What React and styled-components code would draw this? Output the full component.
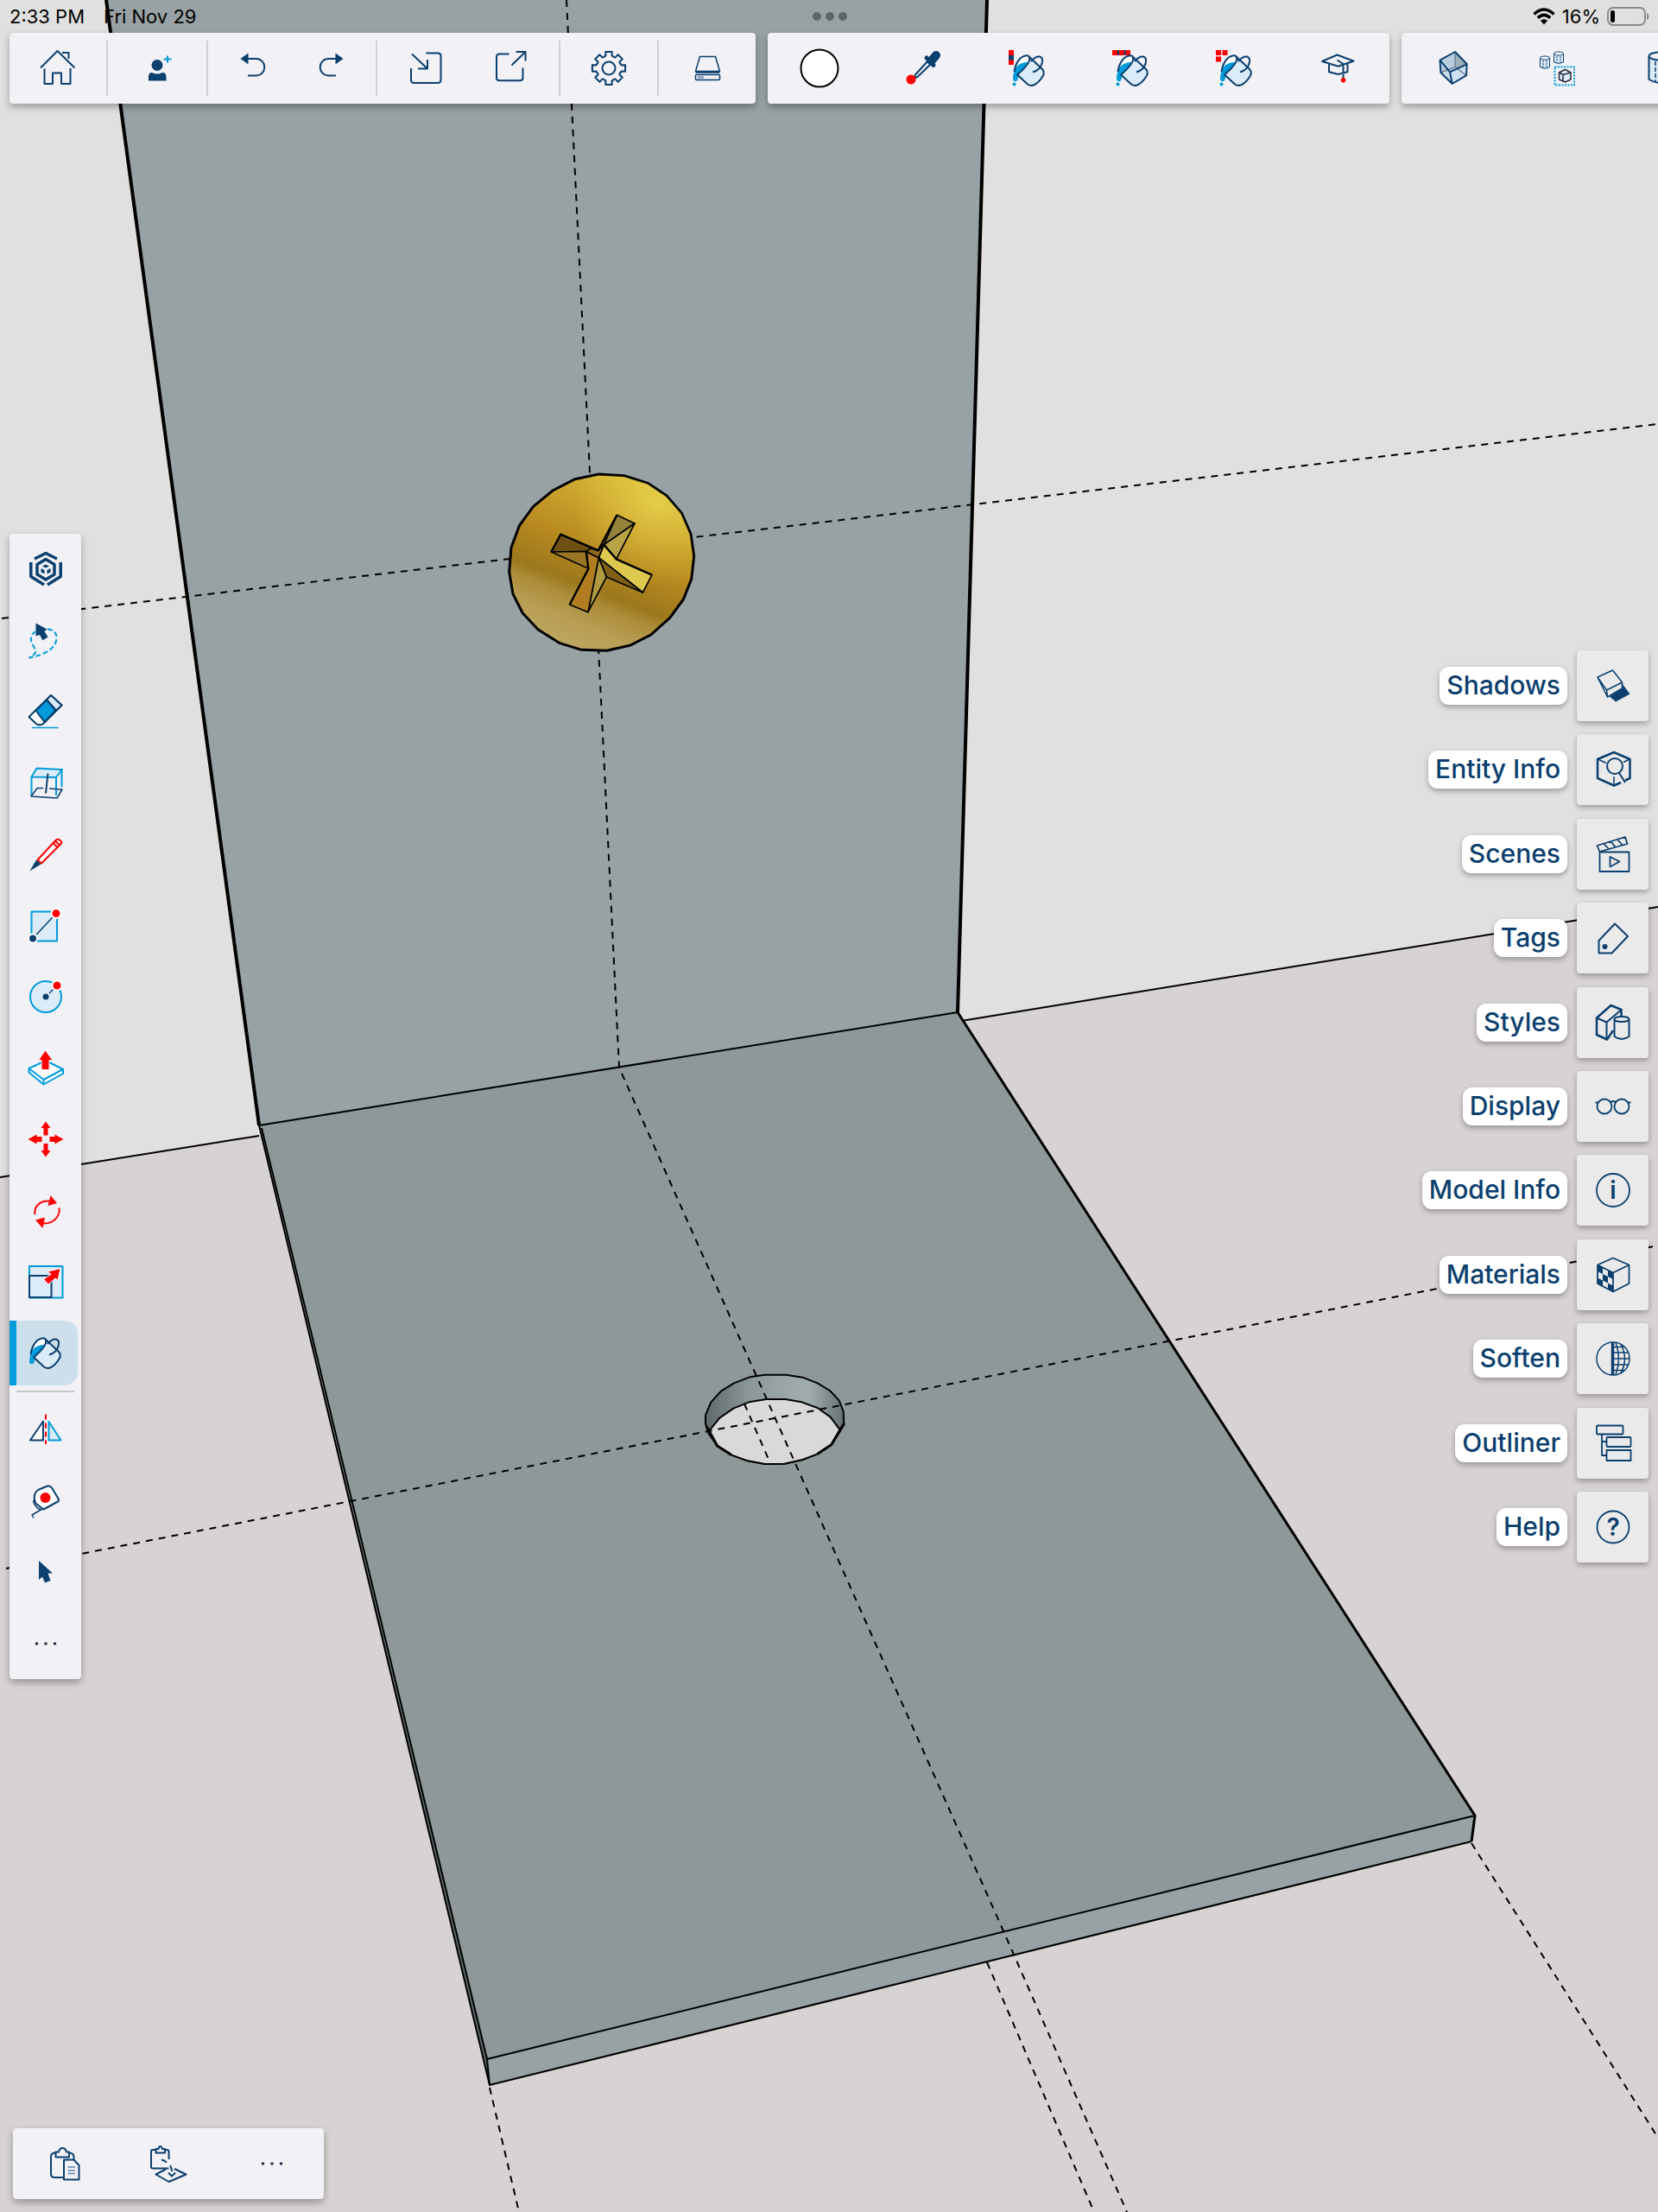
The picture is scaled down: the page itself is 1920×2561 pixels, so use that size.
import React, { useState } from 'react';
import styled, { createGlobalStyle, css } from 'styled-components';

const NAVY = '#0b3f6e';
const BLUE = '#029bdc';
const RED = '#ff0000';
const PALE = '#dbebf8';

const GlobalStyle = createGlobalStyle`
  *, *::before, *::after {
    box-sizing: border-box;
  }

  body {
    margin: 0;
    background: #d7d3d2;
    font-family: Inter, Roboto, 'Liberation Sans', sans-serif;
  }

  button {
    margin: 0;
    padding: 0;
    border: 0;
    background: none;
    color: inherit;
    font: inherit;
    cursor: pointer;
  }
`;

const Screen = styled.div`
  position: relative;
  display: grid;
  grid-template-columns: minmax(0, 1fr);
  grid-template-rows: auto auto 1fr auto;
  min-height: 100vh;
  overflow: hidden;
`;

const Canvas = styled.svg`
  position: absolute;
  inset: 0;
  width: 100%;
  height: 100%;
`;

const StatusBar = styled.header`
  position: relative;
  display: grid;
  grid-template-columns: 1fr auto 1fr;
  align-items: center;
  height: 38px;
  padding: 0 10px 0 11px;
  color: #000;
  font-size: 22px;
  font-weight: 400;
  line-height: 38px;
`;

const StatusGroup = styled.div`
  display: flex;
  align-items: center;
  gap: ${({ $gap }) => $gap}px;
  justify-content: ${({ $end }) => ($end ? 'flex-end' : 'flex-start')};
`;

const MultitaskDots = styled.button`
  display: flex;
  gap: 5px;

  span {
    width: 10px;
    height: 10px;
    border-radius: 50%;
    background: #5c6769;
  }
`;

const TopBar = styled.nav`
  position: relative;
  display: flex;
  gap: 14px;
  padding-left: 11px;
`;

const panel = css`
  background: #f2f1f6;
  border-radius: 4px;
  box-shadow: 0 4px 8px rgba(0, 0, 0, 0.3);
`;

const Toolbar = styled.div`
  ${panel}
  display: flex;
  flex: none;
  align-items: center;
  height: 82px;
`;

const ToolGroup = styled.div`
  display: flex;
  justify-content: center;
  align-items: center;
  gap: ${({ $gap = 0 }) => $gap}px;
  height: 64px;
  padding: 0 ${({ $pad = 11 }) => $pad}px;

  & + & {
    border-left: 2px solid #cfcfd4;
  }
`;

const ToolButton = styled.button`
  display: grid;
  place-items: center;
  width: ${({ $width = 120 }) => $width}px;
  height: 64px;
`;

const Workspace = styled.main`
  position: relative;
  display: flex;
  justify-content: space-between;
  align-items: center;
  padding: 0 11px;
`;

const Rail = styled.div`
  ${panel}
  width: 83px;
`;

const RailSection = styled.div`
  display: grid;
  grid-auto-rows: 1fr;
  align-items: center;
  height: ${({ $height }) => $height}px;
`;

const RailDivider = styled.hr`
  height: 2px;
  margin: 2px 8px;
  border: 0;
  background: #c6c6ca;
`;

const RailButton = styled.button`
  display: grid;
  place-items: center;
  width: 83px;
  height: 75px;

  ${({ $active }) =>
    $active &&
    css`
      width: 79px;
      padding-right: 4px;
      border-left: 8px solid ${BLUE};
      border-radius: 0 15px 15px 0;
      background: #cddfea;
    `}
`;

const PanelList = styled.div`
  display: grid;
  grid-auto-rows: 1fr;
  align-items: center;
  justify-items: end;
  height: 1072px;
`;

const PanelButton = styled.button`
  display: flex;
  align-items: center;
  gap: 11px;
`;

const PanelLabel = styled.span`
  height: 44px;
  padding: 0 8px;
  border-radius: 11px;
  background: #fff;
  box-shadow: 0 3px 6px rgba(0, 0, 0, 0.3);
  color: ${NAVY};
  font-size: 30px;
  font-weight: 500;
  line-height: 43px;
`;

const PanelTile = styled.span`
  display: grid;
  place-items: center;
  width: 83px;
  height: 82px;
  border-radius: 4px;
  background: #eaeaea;
  box-shadow: 0 3px 6px rgba(0, 0, 0, 0.3);
`;

const Footer = styled.footer`
  position: relative;
  display: flex;
  padding: 22px 15px 15px;
`;

const IconSvg = styled.svg`
  display: block;
  width: 48px;
  height: 48px;
  overflow: visible;
  fill: none;
  stroke: ${NAVY};
  stroke-width: 2;
  stroke-linejoin: round;

  text {
    fill: ${NAVY};
    stroke: none;
    font-family: Inter, sans-serif;
    text-anchor: middle;
  }
`;

const gearPoints = Array.from({ length: 8 }, (_, i) =>
  [
    [-22, 14.5],
    [-14, 15],
    [-11, 19.5],
    [11, 19.5],
    [14, 15],
    [22, 14.5],
  ].map(([deg, r]) => {
    const a = ((i * 45 + deg - 90) * Math.PI) / 180;
    const radius = i % 2 ? r - 0.5 : r;
    return `${(24 + radius * Math.cos(a)).toFixed(1)},${(24 + radius * Math.sin(a)).toFixed(1)}`;
  })
)
  .flat()
  .join(' ');

const Bucket = () => (
  <>
    <path
      d="M26 10.5L42 25Q46 28 43 33Q38 42 31 44Q28 45 25 42L12 29L22 23Q28 17 27 12Z"
      fill={PALE}
      stroke="none"
    />
    <path
      d="M10 28Q12 17 18 12Q25 7 27 11Q28 17 21 24Q16 28 13 31L10 29Z"
      fill="#fff"
      stroke="none"
    />
    <path
      d="M26 17Q17 17 12.500 22Q8 28 8 37Q9 40 12 39Q14 38 14.500 32Q18 27 22 24Q25 21 26 17Z"
      fill={BLUE}
      stroke="none"
    />
    <path d="M9.500 28Q11 18 17 12Q23 8 26 9.800Q29 13 25 19Q20 26 13 31.500L25 42.500Q28 45 32 43.500Q38 41 43 32.500Q45 28.500 42 25L26 10" />
    <path d="M29 16Q34 10 39 10.500Q43 12 42 17Q40 26 31 28.500" />
  </>
);

const icons = {
  home: (
    <path d="M4 23.500L23.500 4L43.500 23.500M8.500 24.500V42H18V29.500H28V42H38.500V24M29 6H36.500V13" />
  ),
  person: (
    <>
      <ellipse cx="24" cy="20.500" rx="6.500" ry="6.500" fill={NAVY} stroke="none" />
      <path d="M14 38.500V34Q14 29 18 29Q24 32 30 29Q34.500 29 34.500 34V38.500Z" fill={NAVY} stroke="none" />
      <path d="M31.500 13.500H40.500M36 9.500V17.500" stroke={BLUE} />
    </>
  ),
  undo: (
    <>
      <path d="M9.500 13L18.500 6.500V19.500Z" fill={NAVY} stroke="none" />
      <path d="M18 13H28.500A9.800 9.800 0 0 1 28.500 32.500H18" />
    </>
  ),
  redo: (
    <>
      <path d="M38.500 13L29.500 6.500V19.500Z" fill={NAVY} stroke="none" />
      <path d="M30 13H20.500A9.800 9.800 0 0 0 20.500 32.500H30" />
    </>
  ),
  importFile: (
    <path d="M8 7.500L26 24.500M15 24.500H26V14M7 24V37.500Q7 41 10.500 41H38Q41.500 41 41.500 37.500V10Q41.500 6.500 38 6.500H24.500" />
  ),
  exportFile: (
    <path d="M25.500 20.500L41.500 5M30.500 5H41.500V15.500M38.500 23.500V35Q38.500 38.300 35 38.300H11.500Q8 38.300 8 35V11Q8 7.500 11.500 7.500H22.500" />
  ),
  gear: (
    <>
      <polygon points={gearPoints} />
      <circle cx="24" cy="24" r="7.500" />
    </>
  ),
  drive: (
    <>
      <path d="M15.500 10.500H33.500L38.500 27.500H10.500ZM10.500 29H38.500" strokeWidth="1.500" />
      <rect x="10.500" y="31.500" width="28" height="6" rx="1" strokeWidth="1.500" />
      <path d="M13 34.500H20" stroke="#7f9dbd" strokeWidth="2.500" />
    </>
  ),
  swatch: <circle cx="24" cy="24" r="21.500" fill="#fff" stroke="#000" />,
  dropper: (
    <>
      <path d="M29.500 15.500L15 31.500L13.500 35.500L17.500 34L33 19" />
      <path d="M33.500 15.500L39 9" strokeWidth="10" strokeLinecap="round" />
      <path d="M28 12L36 20.500" strokeWidth="5" strokeLinecap="round" />
      <circle cx="10" cy="37" r="5.500" fill={RED} stroke="none" />
    </>
  ),
  paintVertical: (
    <>
      <path d="M6 3V20" stroke={RED} strokeWidth="6" />
      <path d="M6 9V14.500" strokeWidth="6" />
      <Bucket />
      <circle cx="9.500" cy="42.500" r="2" fill={BLUE} stroke="none" />
    </>
  ),
  paintRow: (
    <>
      <path d="M3 6H24" stroke={RED} strokeWidth="6" />
      <path d="M9 6H11M16.500 6H18.500" strokeWidth="6" />
      <Bucket />
      <circle cx="9.500" cy="42.500" r="2" fill={BLUE} stroke="none" />
    </>
  ),
  paintGrid: (
    <>
      <path d="M3 6H9M10.500 6H16.500M3 13.500H9" stroke={RED} strokeWidth="6" />
      <Bucket />
      <circle cx="9.500" cy="42.500" r="2" fill={BLUE} stroke="none" />
    </>
  ),
  learn: (
    <>
      <path d="M6 16L23.500 8.500L42.500 15.800L24.500 21.800ZM14 19V28.300L24.500 31L35.500 28.300V19M23.500 14.500L30.500 19V36" />
      <circle cx="30.500" cy="37.700" r="2.800" fill={RED} stroke="none" />
    </>
  ),
  cube: (
    <>
      <path d="M26 5L8.500 14.700L9.400 29L22.700 42L39 32.300L39.700 19.300Z" fill="#b9cfe0" stroke="none" />
      <path d="M26 5V22.500L39 32.300L39.700 19.300Z" fill="#9db0be" stroke="none" />
      <path d="M20 28.300L9.400 29L22.700 42L39 32.300L39.700 19.300Z" fill="#cde0ef" stroke="none" />
      <path d="M26 5V22.500L9.400 29M26 22.500L39 32.300" stroke="#6f8599" strokeWidth="1.500" />
      <path d="M26 5L8.500 14.700L9.400 29L22.700 42L39 32.300L39.700 19.300ZM8.500 14.700L20 28.300L39.700 19.300M20 28.300L22.700 42" />
    </>
  ),
  components: (
    <>
      <g strokeWidth="1">
        <path d="M4.500 12V22.500Q10 26 15.500 22.500V12" fill={PALE} />
        <ellipse cx="10" cy="12" rx="5.500" ry="2" fill="#fff" />
        <path d="M20.500 7V17Q26 20 31.500 17V7" fill={PALE} />
        <ellipse cx="26" cy="7" rx="5.500" ry="2" fill="#fff" />
        <path d="M8 15V23M12 15V23M24 10V17M28 10V17" strokeDasharray="2 1" />
      </g>
      <rect x="21.500" y="22.500" width="22.500" height="21" stroke={BLUE} strokeDasharray="2 1.500" />
      <g stroke="#2b2b3c" strokeWidth="1.500">
        <path d="M26.500 29L33.500 25.500L40 29V37L33.500 40L26.500 37Z" fill={PALE} />
        <path d="M26.500 29L31 31.500L40 29M31 31.500V39.500" />
      </g>
    </>
  ),
  cylinder: (
    <>
      <path d="M10.500 10V37Q24 45 37.500 37V10" fill={PALE} />
      <ellipse cx="24" cy="10" rx="13.500" ry="4.500" fill="#f2f1f6" />
      <path d="M18 16V41M30 16V41" strokeDasharray="5 2" strokeWidth="1.500" />
    </>
  ),
  model: (
    <>
      <path d="M11 12L24 5.500L37 12M6.800 16V32.500L22 42M41.200 16V32.500L26 42" strokeWidth="3.500" />
      <path d="M24 12.500L34 18.500V30L24 36L14 30V18.500Z" strokeWidth="3.500" />
      <path d="M20 20.500L24 18.500L28 20.500L24 22.500ZM18.500 23L22.500 25V29.500L18.500 27.500ZM29.500 23L25.500 25V29.500L29.500 27.500Z" fill={NAVY} stroke="none" />
    </>
  ),
  lasso: (
    <>
      <path
        d="M26 10.500Q37 11 36.500 22Q34 38 5 43.500Q14 39 12 34L7.500 26Q5 18 12 13"
        stroke={BLUE}
        strokeDasharray="6 3"
      />
      <path d="M12.500 3.500L25.500 10.500L22.500 13L26.500 19.500L20.500 23.500L17 17L12.500 18.500Z" fill={NAVY} stroke="none" />
    </>
  ),
  eraser: (
    <>
      <path d="M4.500 30L30 5L42.500 16.500L21.500 37.500Q17 41 13 38Z" fill="#fff" />
      <path d="M25 10L30 5L42.500 16.500L36 22.500Z" fill={PALE} />
      <path d="M12.500 22.500L25 10.500L35.500 22.500L22.500 36Z" fill={BLUE} />
      <path d="M8 42.500H38.500" stroke={BLUE} strokeWidth="1.500" />
    </>
  ),
  box: (
    <>
      <path d="M7.500 16.500L13.500 6.500L43 8L36 17Z" fill={PALE} stroke={BLUE} />
      <path d="M7.500 16.500V38M36 17V38M42.500 8V28" stroke={BLUE} />
      <path d="M21 29.500H14L7 39L37 41L43 31L28 30" strokeWidth="1.500" />
      <path d="M26.500 12.500L24 35.500" />
    </>
  ),
  pencil: (
    <>
      <path d="M14.500 30.500L36 7.500Q38 6 40 7.500Q43 9.500 42 11.500L19 34.500ZM33 11.500L37.500 16M35.500 9L40 13.500" stroke={RED} fill="#fff" />
      <path d="M5.500 43.500L13 30.500L18.500 35.500Z" fill={NAVY} stroke="none" />
    </>
  ),
  rectangle: (
    <>
      <rect x="7.500" y="7.500" width="29.500" height="34" fill={PALE} stroke={BLUE} />
      <path d="M9 38.500L36 9.500" strokeWidth="1.500" />
      <circle cx="9" cy="38.500" r="5" fill={NAVY} stroke="#fff" />
      <circle cx="36" cy="9.500" r="5.500" fill={RED} stroke="#fff" />
    </>
  ),
  circle: (
    <>
      <circle cx="24" cy="24" r="18" fill={PALE} stroke={BLUE} />
      <path d="M28 20L33 15" strokeWidth="1.500" />
      <circle cx="24" cy="24" r="3.500" fill={NAVY} stroke="none" />
      <circle cx="37" cy="11" r="5.500" fill={RED} stroke="#fff" />
    </>
  ),
  pushPull: (
    <>
      <path d="M24 15L4.500 24V28.500L21.500 42.500L44 30V25Z" fill="#fff" stroke={BLUE} />
      <path d="M4.500 24L21.500 37L44 25M21.500 37V42.500" stroke={BLUE} />
      <path d="M23.500 3L32 14.500H28V25.500H19V14.500H15.500Z" fill={RED} stroke="#f2f1f6" strokeWidth="1" />
    </>
  ),
  move: (
    <path
      d="M24 3.500L29.500 11H26.500V19.500H21.500V11H18.500ZM24 44.500L29.500 37H26.500V29H21.500V37H18.500ZM3.500 24L13.500 18.500V21H19.500V27H13.500V29.500ZM44.500 24L34.500 18.500V21H28.500V27H34.500V29.500Z"
      fill={RED}
      stroke="none"
    />
  ),
  rotate: (
    <>
      <path d="M11.500 28C10 19 17 12 28 12.500M39.500 20.500C41 29 34 39 21 38.500" stroke={RED} />
      <path d="M37 15L29.500 6L26.500 18ZM12 34.500L23 31.500L20.500 44Z" fill={RED} stroke="none" />
    </>
  ),
  scale: (
    <>
      <rect x="5" y="6" width="38.500" height="36.500" fill={PALE} stroke={BLUE} />
      <rect x="5" y="17" width="25.500" height="25" />
      <path d="M41 8.500L38 22L35 20L27 27L21.500 21L30 15.500L26.500 12Z" fill={RED} stroke="#fff" strokeWidth="1" />
    </>
  ),
  paint: (
    <g transform="translate(-3 -3)">
      <Bucket />
    </g>
  ),
  flip: (
    <>
      <path d="M6 36.500H21V14.500Z" fill="#fff" />
      <path d="M27.500 15V36.500H41.500Z" fill={PALE} stroke={BLUE} />
      <path d="M24 6.500V41" stroke={RED} strokeDasharray="6 4" />
    </>
  ),
  tape: (
    <>
      <path d="M11 17Q12 13 15 11L26 6.500Q29 6 31 8.500L39 22Q39.500 24 37 25L21.500 33.500L13 27Q10 23 11 17Z" fill="#fff" />
      <circle cx="23.500" cy="20" r="6" fill={RED} stroke="none" />
      <path d="M20 33L8 40L10 43.500M9.500 23Q11 31 18 34M11 21V26" strokeWidth="1.500" />
    </>
  ),
  select: (
    <path d="M16 11L32 25.500H26.500L29.500 34L23 36.500L20 29.500L16 33Z" fill={NAVY} stroke="none" />
  ),
  more: (
    <g fill="#2f2d48" stroke="none">
      <circle cx="13.500" cy="24" r="1.800" />
      <circle cx="24" cy="24" r="1.800" />
      <circle cx="34.500" cy="24" r="1.800" />
    </g>
  ),
  shadows: (
    <>
      <path d="M33 28L34.500 21.500L43.500 33.500L27 42.500L20 36.500Z" fill={NAVY} stroke="none" />
      <path d="M6 14L23.500 6L34.500 20V27L17.500 37ZM6 14L16.500 29L34.500 20M16.500 29L17.500 37" fill="#eaeaea" strokeWidth="1.500" />
    </>
  ),
  entity: (
    <>
      <path d="M33 39L25 42.500L6 34V12L25 4L43.500 12V34L38 36.500" strokeWidth="2.500" />
      <path d="M6.500 12L16 16.500M43 12L36 15.500M25 32V42" strokeWidth="1.500" />
      <circle cx="26" cy="20" r="9" />
      <path d="M31 28L38 39" />
    </>
  ),
  scenes: (
    <>
      <rect x="8.500" y="21.500" width="34" height="22.500" strokeWidth="1.800" />
      <path d="M20.500 27L31.500 32.500L20.500 38.500Z" strokeWidth="1.800" />
      <path d="M5.500 14L38 4L40.500 12L8.500 21ZM13 11.500L19 18M21 9L27 16M29 7L35 13.500" strokeWidth="1.800" />
    </>
  ),
  tags: (
    <>
      <path d="M26 7.500L41 22L22.500 41.500H7.500V27Z" />
      <circle cx="14.500" cy="34" r="3" fill={NAVY} stroke="none" />
    </>
  ),
  styles: (
    <>
      <path d="M33.500 18V9L21.500 4L5 18.500V38L17 43.500L24 33" strokeWidth="2.500" />
      <path d="M5 18.500L16.500 23.500L33 9.500M16.500 23.500V43" />
      <path d="M25.500 20.500V40Q34 46 42.500 40V20.500" fill="#eaeaea" />
      <ellipse cx="34" cy="20" rx="8.500" ry="3" fill="#eaeaea" />
    </>
  ),
  display: (
    <g strokeWidth="1.800">
      <circle cx="14" cy="24" r="8.500" />
      <circle cx="34" cy="24" r="8.500" />
      <path d="M21 19Q24 17 27 19M3.500 19.500H7M41 19.500H44.500" />
    </g>
  ),
  info: (
    <>
      <circle cx="24" cy="24" r="19" strokeWidth="1.800" />
      <text x="24" y="34" fontSize="28" fontWeight="600">i</text>
    </>
  ),
  materials: (
    <>
      <path d="M6 12.500L12 15.500V23L6 20ZM18 18.500L24 21.500V29L18 26ZM12 23L18 26V33.500L12 30.500ZM6 27.500L12 30.500V38L6 34.500ZM18 33.500L24 36.500V44L18 41Z" fill={NAVY} stroke="none" />
      <path d="M24 4.500L42.500 12.500V34L24 43.500L6 34V12.500ZM6 12.500L24 21.500L42.500 12.500M24 21.500V43.500" strokeWidth="1.800" />
    </>
  ),
  soften: (
    <g strokeWidth="1.500">
      <circle cx="24" cy="24" r="19" />
      <path d="M23.500 5V43" strokeWidth="3.500" />
      <path d="M27 5.500Q34 24 27 42.500M33 7.500Q42 24 33 40.500M24 10.500H37M24 17H42M24 24H43M24 31H42M24 37.500H37" />
    </g>
  ),
  outliner: (
    <g strokeWidth="1.800">
      <rect x="5" y="3.500" width="30.500" height="10" rx="1" />
      <rect x="16.500" y="17" width="28" height="11" rx="1" />
      <rect x="16.500" y="32" width="28" height="12" />
      <path d="M11 13.500V38H16.500M11 22H16.500" />
    </g>
  ),
  help: (
    <>
      <circle cx="24" cy="24" r="18.500" strokeWidth="1.800" />
      <text x="24" y="34" fontSize="28" fontWeight="600">?</text>
    </>
  ),
  paste: (
    <>
      <path d="M22.500 40H12Q8 40 8 36V16Q8 11.500 13 11.500M29 11.500Q34.500 11.500 34.500 16.500V19.500" />
      <path d="M13.500 16.500V10.500H17Q18 6 21.300 6Q25 6 26 10.500H29V16.500Z" />
      <path d="M23 19.500H34.500L40.500 26V42.500H23Z" />
      <path d="M27.500 28H36M27.500 32H36M27.500 35.500H36" stroke="#7f9dbd" />
    </>
  ),
  pasteInPlace: (
    <>
      <path d="M24.500 29.500H6Q4 29.500 4 27.500V10Q4 8 6 8H9M20 8H22Q24.500 8 24.500 10V19" />
      <path d="M9.500 11.500V7H12.500Q13 4 14.500 4Q16.500 4 17 7H20V11.500Z" />
      <path d="M21 30.500L9.500 36.500L24.500 45L44.500 36.500L31 30" />
      <path d="M16 19.500Q19 20 22 22.500M26 26Q28 29 28 33M24 34.500L28 38.500L32 34.500" />
    </>
  ),
};

const Icon = ({ name }) => (
  <IconSvg viewBox="0 0 48 48" aria-hidden="true">
    {icons[name]}
  </IconSvg>
);

const fileGroups = [
  { tools: [['home', 'Home']] },
  { tools: [['person', 'Invite']], pad: 12 },
  { tools: [['undo', 'Undo'], ['redo', 'Redo']], pad: 7 },
  { tools: [['importFile', 'Import'], ['exportFile', 'Export']], gap: 8 },
  { tools: [['gear', 'Settings']] },
  { tools: [['drive', 'Storage']] },
];

const paintTools = [
  ['swatch', 'Current material'],
  ['dropper', 'Sample'],
  ['paintVertical', 'Paint connected'],
  ['paintRow', 'Paint same'],
  ['paintGrid', 'Paint all'],
  ['learn', 'Learn'],
];

const viewTools = [
  ['cube', 'X-ray'],
  ['components', 'Components'],
  ['cylinder', 'Hidden geometry'],
];

const railTools = [
  ['model', 'Model'],
  ['lasso', 'Lasso'],
  ['eraser', 'Eraser'],
  ['box', 'Box'],
  ['pencil', 'Line'],
  ['rectangle', 'Rectangle'],
  ['circle', 'Circle'],
  ['pushPull', 'Push/Pull'],
  ['move', 'Move'],
  ['rotate', 'Rotate'],
  ['scale', 'Scale'],
  ['paint', 'Paint'],
];

const railExtras = [
  ['flip', 'Flip'],
  ['tape', 'Tape measure'],
  ['select', 'Select'],
  ['more', 'More tools'],
];

const panels = [
  ['shadows', 'Shadows'],
  ['entity', 'Entity Info'],
  ['scenes', 'Scenes'],
  ['tags', 'Tags'],
  ['styles', 'Styles'],
  ['display', 'Display'],
  ['info', 'Model Info'],
  ['materials', 'Materials'],
  ['soften', 'Soften'],
  ['outliner', 'Outliner'],
  ['help', 'Help'],
];

const clipboardTools = [
  ['paste', 'Paste'],
  ['pasteInPlace', 'Paste in place'],
  ['more', 'More actions'],
];

// round screw head, upper guide crossing
const Screw = () => (
  <svg x="560" y="520" width="280" height="260" viewBox="0 0 840 780">
    <defs>
      <linearGradient id="brass" gradientUnits="userSpaceOnUse" x1="530" y1="80" x2="290" y2="690">
        <stop offset="0" stopColor="#d9bf3c" />
        <stop offset="0.250" stopColor="#c9a02c" />
        <stop offset="0.450" stopColor="#b88a20" />
        <stop offset="0.660" stopColor="#9c781c" />
        <stop offset="0.740" stopColor="#ac8d3a" />
        <stop offset="0.850" stopColor="#b89d52" />
        <stop offset="1" stopColor="#bda762" />
      </linearGradient>
      <radialGradient id="shine" gradientUnits="userSpaceOnUse" cx="600" cy="190" r="290">
        <stop offset="0" stopColor="#f0de58" stopOpacity="0.600" />
        <stop offset="1" stopColor="#e8d040" stopOpacity="0" />
      </radialGradient>
    </defs>
    <g stroke="#000" strokeLinejoin="round">
      <path
        d="M400 87L488 92L570 118L636 162L688 222L720 295L731 372L722 452L694 522L647 586L581 645L508 682L428 700L340 697L265 674L190 627L136 570L102 503L89 427L96 342L124 266L173 199L240 144L318 104Z"
        fill="url(#brass)"
        strokeWidth="9"
      />
      <path
        d="M400 90L488 95L570 121L634 164L685 222L717 295L728 372L719 452L560 520L300 400L260 140L318 107Z"
        fill="url(#shine)"
        stroke="none"
      />
      <g strokeWidth="5">
        <path d="M268 296L398 352L355 356L235 357Z" fill="#6f5012" />
        <path d="M235 357L355 355L363 414Z" fill="#9a7624" />
        <path d="M463 229L525 258L418 332Z" fill="#94813a" />
        <path d="M525 258L461 382L418 332Z" fill="#b8a445" />
        <path d="M418 332L461 382L585 437L553 498L400 377Z" fill="#dfc84e" />
        <path d="M400 377L553 498L427 444Z" fill="#806015" />
        <path d="M400 377L427 444L363 566Z" fill="#b09a3f" />
        <path d="M358 356L400 377L363 566L299 540L365 414Z" fill="#b07d20" />
        <path d="M358 356L372 344L398 352L418 332L400 377Z" fill="#8f6818" />
      </g>
      <path
        d="M235 357L268 296L398 352L463 229M418 332L461 382L585 437M299 540L365 414"
        fill="none"
        strokeWidth="7"
      />
    </g>
  </svg>
);

const Hole = () => (
  <svg x="780" y="1560" width="240" height="160" viewBox="0 0 720 480">
    <defs>
      <linearGradient id="bore" x1="0" x2="1" y1="0" y2="0">
        <stop offset="0" stopColor="#5f696a" />
        <stop offset="0.300" stopColor="#8a9596" />
        <stop offset="0.500" stopColor="#98a2a4" />
        <stop offset="0.750" stopColor="#a0acad" />
        <stop offset="1" stopColor="#667071" />
      </linearGradient>
    </defs>
    <g stroke="#000" strokeWidth="6" strokeLinejoin="round">
      <path
        d="M111 235L130 190L165 152L210 124L265 103L318 95H390L448 104L500 124L543 150L575 184L590 222L592 268L578 292L548 338L500 370L448 390L385 404L318 405L258 394L200 373L152 342L122 300L111 265Z"
        fill="url(#bore)"
      />
      <path
        d="M122 292L160 245L208 212L262 190L322 180H388L445 190L500 210L545 242L578 286L548 338L500 370L448 390L385 404L318 405L258 394L200 373L152 342Z"
        fill="#d9d9d9"
      />
    </g>
    <path
      d="M115 275L152 342L200 373M592 265L548 338L500 370"
      fill="none"
      stroke="#000"
      strokeWidth="9"
    />
    <path d="M246 196L336 402" stroke="#000" strokeWidth="6" strokeDasharray="24 21" />
  </svg>
);

const Scene = () => (
  <Canvas viewBox="0 0 1920 2561" preserveAspectRatio="xMidYMid slice" aria-hidden="true">
    <rect width="1920" height="2561" fill="#d7d3d2" />
    <path d="M0 0H1920V1050L1109 1183L300 1315L0 1363Z" fill="#e0e0de" />
    <path d="M0 1363L300 1315M1113 1182L1920 1050" stroke="#000" strokeWidth="2" />

    <path d="M123 0H1143L1109 1172L300 1303Z" fill="#98a1a3" />
    <path d="M300 1303L1109 1172L1708 2102L564 2384Z" fill="#8f9898" />
    <path d="M564 2384L1708 2102L1704 2132L567 2414Z" fill="#98a2a4" />
    <path d="M300 1303L564 2384L567 2414Z" fill="#5d6768" />

    <g fill="none" stroke="#000" strokeWidth="2">
      <path d="M300 1303L1109 1172M564 2384L1708 2102M303 1306L564 2384L567 2414L1704 2132" />
      <path d="M300 1303L567 2414" />
      <path d="M1109 1172L1708 2102L1704 2132" strokeWidth="3" />
      <path d="M123 0L300 1303M1143 0L1109 1172" strokeWidth="4" />
    </g>

    <Hole />

    <g fill="none" stroke="#000" strokeWidth="2" strokeDasharray="8 7">
      <path d="M656 0L717 1236L1163 2238L1305 2561" />
      <path d="M1143 2272L1267 2561" />
      <path d="M2 716L1920 491" />
      <path d="M7 1816L1920 1442" />
      <path d="M1704 2134L1920 2475" />
      <path d="M567 2417L601 2561" />
    </g>

    <Screw />
  </Canvas>
);

const WifiIcon = () => (
  <svg width="26" height="20" viewBox="0 0 26 20" aria-hidden="true">
    <g fill="none" stroke="#000" strokeWidth="3.500">
      <path d="M1.500 7.500Q13 -3.500 24.500 7.500" />
      <path d="M5.800 11.800Q13 5 20.200 11.800" />
    </g>
    <path d="M8.800 14.800Q13 11.500 17.200 14.800L13 19.500Z" />
  </svg>
);

const BatteryIcon = () => (
  <svg width="49" height="22" viewBox="0 0 49 22" aria-hidden="true">
    <rect x="1" y="1" width="43" height="20" rx="6" fill="none" stroke="#8b8b89" strokeWidth="2" />
    <rect x="4" y="4" width="5" height="14" rx="2.500" />
    <path d="M46 7Q48.500 8 48.500 11Q48.500 14 46 15Z" fill="#8b8b89" />
  </svg>
);

const App = () => {
  const [activeTool, setActiveTool] = useState('paint');

  const renderRail = (tools) =>
    tools.map(([name, label]) => (
      <RailButton
        key={name}
        aria-label={label}
        $active={activeTool === name}
        onClick={() => setActiveTool(name)}
      >
        <Icon name={name} />
      </RailButton>
    ));

  const renderTools = (tools, width) =>
    tools.map(([name, label]) => (
      <ToolButton key={name} aria-label={label} $width={width}>
        <Icon name={name} />
      </ToolButton>
    ));

  return (
    <>
      <GlobalStyle />
      <Screen>
        <Scene />
        <StatusBar>
          <StatusGroup $gap={22}>
            <span>2:33 PM</span>
            <span>Fri Nov 29</span>
          </StatusGroup>
          <MultitaskDots aria-label="Multitasking">
            <span />
            <span />
            <span />
          </MultitaskDots>
          <StatusGroup $gap={8} $end>
            <WifiIcon />
            <span>16%</span>
            <BatteryIcon />
          </StatusGroup>
        </StatusBar>

        <TopBar>
          <Toolbar>
            {fileGroups.map(({ tools, pad, gap }) => (
              <ToolGroup key={tools[0][0]} $pad={pad} $gap={gap}>
                {renderTools(tools, 90)}
              </ToolGroup>
            ))}
          </Toolbar>
          <Toolbar>{renderTools(paintTools)}</Toolbar>
          <Toolbar>{renderTools(viewTools)}</Toolbar>
        </TopBar>

        <Workspace>
          <Rail>
            <RailSection $height={990}>{renderRail(railTools)}</RailSection>
            <RailDivider />
            <RailSection $height={330}>{renderRail(railExtras)}</RailSection>
          </Rail>
          <PanelList>
            {panels.map(([name, label]) => (
              <PanelButton key={name}>
                <PanelLabel>{label}</PanelLabel>
                <PanelTile>
                  <Icon name={name} />
                </PanelTile>
              </PanelButton>
            ))}
          </PanelList>
        </Workspace>

        <Footer>
          <Toolbar>{renderTools(clipboardTools)}</Toolbar>
        </Footer>
      </Screen>
    </>
  );
};

export default App;
